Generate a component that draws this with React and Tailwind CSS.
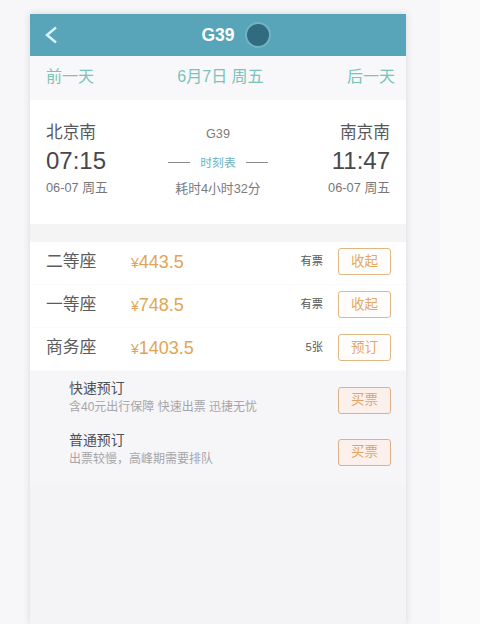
const seats = [
  { name: "二等座", price: "443.5", stock: "有票", action: "收起" },
  { name: "一等座", price: "748.5", stock: "有票", action: "收起" },
  { name: "商务座", price: "1403.5", stock: "5张", action: "预订" },
];

const options = [
  { title: "快速预订", desc: "含40元出行保障 快速出票 迅捷无忧" },
  { title: "普通预订", desc: "出票较慢，高峰期需要排队" },
];

function Header() {
  return (
    <header className="grid h-[42px] grid-cols-[1fr_auto_1fr] items-center bg-[#58a5b9] text-white">
      <svg className="ml-[14px] h-[18px] w-[14px]" viewBox="0 0 14 18" fill="none" stroke="#d8f5fb" strokeWidth="2.4">
        <path d="M12 1.5 3 9l9 7.5" />
      </svg>
      <h1 className="pt-[2px] text-[17.5px] leading-none font-bold">G39</h1>
      <span className="ml-[10px] h-[26px] w-[26px] rounded-full border-2 border-[#70b3c5] bg-[#316b80]" />
    </header>
  );
}

function Station({ name, time, right }) {
  return (
    <div className={right ? "text-right" : "text-left"}>
      <div className="h-[28px] text-[16.7px] leading-[29px] text-[#58585a]">{name}</div>
      <div className="h-[30px] text-[24px] leading-[30px] text-[#48484a]">{time}</div>
      <div className="h-[24px] text-[12.8px] leading-[24px] text-[#77777a]">06-07 周五</div>
    </div>
  );
}

function Trip() {
  return (
    <section className="flex h-[124px] justify-between bg-white pt-[18px] pr-[16px] pl-[16px]">
      <Station name="北京南" time="07:15" />
      <div className="flex flex-col items-center text-[#7b7b7e]">
        <div className="h-[30px] text-[12.7px] leading-[32px]">G39</div>
        <div className="flex h-[28px] items-center gap-[10px]">
          <span className="h-px w-[22px] bg-[#8b8b8e]" />
          <span className="pt-[3px] text-[11.8px] text-[#69b3c1]">时刻表</span>
          <span className="h-px w-[22px] bg-[#8b8b8e]" />
        </div>
        <div className="h-[24px] text-[12.8px] leading-[25px]">耗时4小时32分</div>
      </div>
      <Station name="南京南" time="11:47" right />
    </section>
  );
}

function SeatRow({ name, price, stock, action }) {
  return (
    <div className="flex h-[43px] items-center border-b border-[#fbf9fa] bg-white pr-[15px] pb-[3px] pl-[16px]">
      <span className="w-[85px] pt-px text-[16.8px] text-[#5c5c5e]">{name}</span>
      <span className="flex-1 pt-px text-[18px] text-[#e2a552]">
        <span className="text-[14px]">¥</span>
        {price}
      </span>
      <span className="mr-[15px] text-[11.3px] text-[#59595b]">{stock}</span>
      <button className="h-[27px] w-[53px] rounded-[3px] border border-[#dfb883] bg-[#fffdfb] text-[13.5px] leading-none text-[#e4a95e]">
        {action}
      </button>
    </div>
  );
}

function BookingOption({ title, desc }) {
  return (
    <div className="flex h-[52px] items-center pr-[15px] pl-[39px]">
      <div className="flex-1 pb-[5px]">
        <div className="h-[19px] text-[13.9px] leading-[18px] text-[#505052]">{title}</div>
        <div className="h-[19px] text-[12px] leading-[19px] whitespace-nowrap text-[#a6a5a9]">{desc}</div>
      </div>
      <button className="h-[27px] w-[53px] rounded-[3px] border border-[#dbb08f] bg-[#fbf0eb] text-[13.5px] leading-none text-[#e0a36a]">
        买票
      </button>
    </div>
  );
}

export default function App() {
  return (
    <div className="flex h-[624px] w-[480px] overflow-hidden bg-[#fbfafb] font-['Liberation_Sans','Noto_Sans_CJK_SC',sans-serif]">
      <div className="flex w-[440px] bg-[#f7f6f8] pt-[14px] pl-[30px]">
        <main className="w-[376px] bg-[#f4f4f6] shadow-[0_0_7px_rgba(80,80,90,0.18)]">
          <Header />
          <nav className="grid h-[44px] grid-cols-3 items-center bg-[#f8f7fa] pr-[11px] pb-[2px] pl-4 text-[16px] text-[#78c4b9]">
            <span>前一天</span>
            <span className="text-center whitespace-nowrap">6月7日 周五</span>
            <span className="text-right">后一天</span>
          </nav>
          <Trip />
          <div className="h-[18px] bg-[#f4f4f5]" />
          <section>
            {seats.map((seat) => (
              <SeatRow key={seat.name} {...seat} />
            ))}
          </section>
          <section className="bg-[#f6f5f8] pt-[3px] pb-[6px]">
            {options.map((option) => (
              <BookingOption key={option.title} {...option} />
            ))}
          </section>
        </main>
      </div>
    </div>
  );
}
